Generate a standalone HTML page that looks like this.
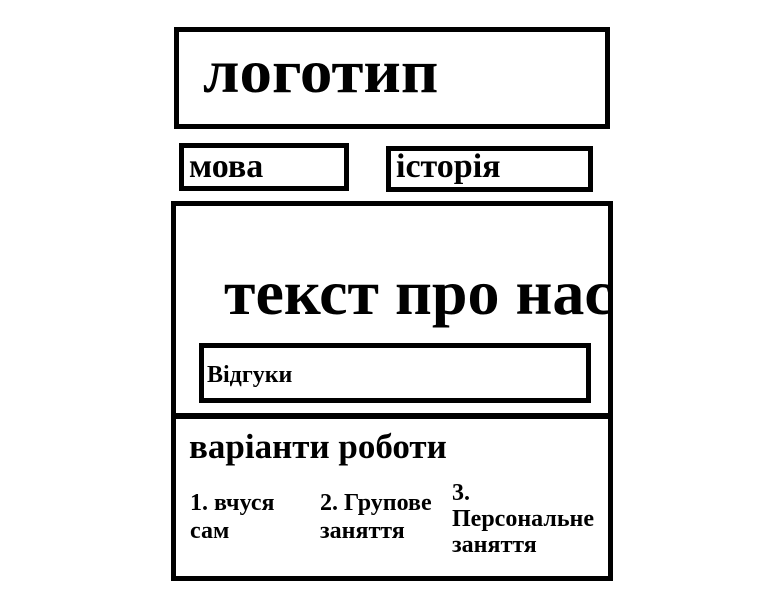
<!DOCTYPE html>
<html><head><meta charset="utf-8"><style>
body{margin:0;width:768px;height:614px;background:#fff;position:relative;overflow:hidden;font-family:"Liberation Serif","DejaVu Serif",serif;font-weight:bold;color:#000}
.b{position:absolute;border:5px solid #000;box-sizing:border-box}
.t{position:absolute;line-height:1;white-space:nowrap}
</style></head><body>
<div class="b" style="left:174px;top:27px;width:436px;height:102px"></div>
<div class="t" style="left:203px;top:40px;font-size:65px;transform:scaleY(0.95)">логотип</div>
<div class="b" style="left:179px;top:143px;width:170px;height:48px"></div>
<div class="t" style="left:189px;top:150px;font-size:34px">мова</div>
<div class="b" style="left:386px;top:146px;width:207px;height:46px"></div>
<div class="t" style="left:396px;top:150px;font-size:34px">історія</div>
<div class="b" style="left:171px;top:201px;width:442px;height:218px;overflow:hidden"><div class="t" style="left:48px;top:55px;font-size:64px">текст про нас</div></div>
<div class="b" style="left:199px;top:343px;width:392px;height:60px"></div>
<div class="t" style="left:207px;top:363px;font-size:24px">Відгуки</div>
<div class="b" style="left:171px;top:413px;width:442px;height:168px"></div>
<div class="t" style="left:189px;top:429px;font-size:35px">варіанти роботи</div>
<div class="t" style="left:190px;top:489px;font-size:24px;line-height:28px">1. вчуся<br>сам</div>
<div class="t" style="left:320px;top:489px;font-size:24px;line-height:28px">2. Групове<br>заняття</div>
<div class="t" style="left:452px;top:480px;font-size:24px;line-height:26px">3.<br>Персональне<br>заняття</div>
</body></html>
